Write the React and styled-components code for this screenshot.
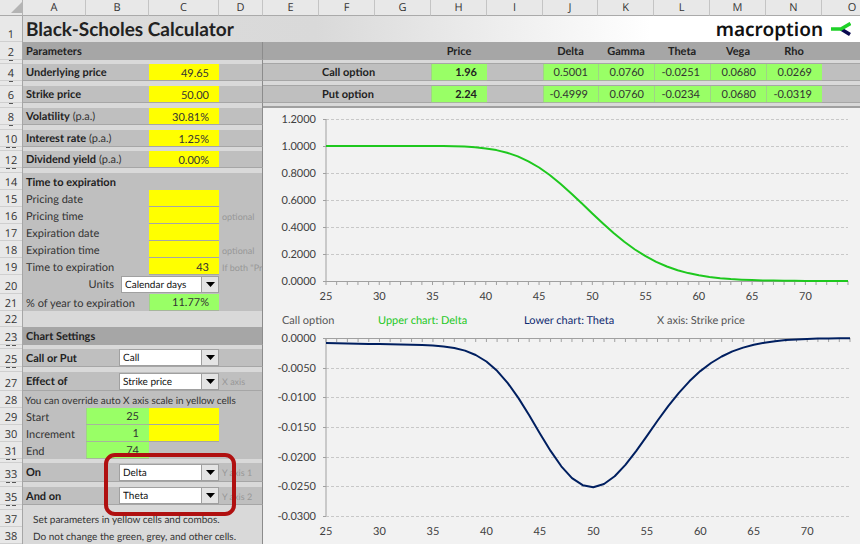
import React, { useState } from "react";
import styled, { createGlobalStyle, css } from "styled-components";

const COLUMNS = [
  ["A", 63],
  ["B", 63],
  ["C", 70],
  ["D", 44],
  ["E", 56],
  ["F", 56],
  ["G", 56],
  ["H", 56],
  ["I", 56],
  ["J", 55],
  ["K", 56],
  ["L", 56],
  ["M", 56],
  ["N", 56],
  ["O", null],
];

const STRIKES = Array.from({ length: 50 }, (_, i) => 25 + i);
const OPTION = { spot: 49.65, vol: 0.3081, rate: 0.0125, years: 43 / 365 };

const pdf = (x) => Math.exp((-x * x) / 2) / Math.sqrt(2 * Math.PI);

const cdf = (x) => {
  const k = 1 / (1 + 0.2316419 * Math.abs(x));
  const poly =
    k *
    (0.31938153 +
      k * (-0.356563782 + k * (1.781477937 + k * (-1.821255978 + k * 1.330274429))));
  const tail = pdf(x) * poly;
  return x > 0 ? 1 - tail : tail;
};

const greeks = (strike) => {
  const { spot, vol, rate, years } = OPTION;
  const dev = vol * Math.sqrt(years);
  const d1 = (Math.log(spot / strike) + (rate + (vol * vol) / 2) * years) / dev;
  const d2 = d1 - dev;
  const decay = (-spot * pdf(d1) * vol) / (2 * Math.sqrt(years));
  const carry = -rate * strike * Math.exp(-rate * years) * cdf(d2);
  return { delta: cdf(d1), theta: (decay + carry) / 365 };
};

const LineChart = ({ title, height, top, bottom, right, max, min, step, axisY, value, color }) => {
  const left = 63;
  const x = (s) => left + ((s - 25) / 49) * (right - left);
  const y = (v) => top + ((max - v) / (max - min)) * (bottom - top);
  const count = Math.round((max - min) / step);
  const levels = Array.from({ length: count + 1 }, (_, i) => max - i * step);
  const points = STRIKES.map((s) => `${x(s).toFixed(1)},${y(value(s)).toFixed(1)}`);

  return (
    <Chart viewBox={`0 0 597 ${height}`} role="img" aria-label={title}>
      {levels.map((v) => (
        <g key={v}>
          <GridLine x1={left} x2={right} y1={Math.round(y(v)) + 0.5} y2={Math.round(y(v)) + 0.5} />
          <AxisLine x1={left - 3} x2={left} y1={Math.round(y(v)) + 0.5} y2={Math.round(y(v)) + 0.5} />
          <AxisText x={53} y={Math.round(y(v)) + 4} textAnchor="end">
            {(Math.abs(v) < 1e-9 ? 0 : v).toFixed(4)}
          </AxisText>
        </g>
      ))}
      <AxisLine x1={left} x2={left} y1={top} y2={bottom} />
      <AxisLine x1={left} x2={right} y1={axisY + 0.5} y2={axisY + 0.5} />
      {STRIKES.map((s) => (
        <AxisLine key={s} x1={x(s)} x2={x(s)} y1={axisY} y2={axisY + 4} />
      ))}
      {STRIKES.filter((s) => s % 5 === 0).map((s) => (
        <AxisText key={s} x={x(s)} y={bottom + 19} textAnchor="middle">
          {s}
        </AxisText>
      ))}
      <polyline points={points.join(" ")} fill="none" stroke={color} strokeWidth="2" strokeLinejoin="round" />
    </Chart>
  );
};

const Row = ({ n, h, tone, children }) => (
  <SheetRow $h={h} $tone={tone}>
    <RowHead scope="row">
      <RowNumber $h={h}>{n}</RowNumber>
    </RowHead>
    {children}
  </SheetRow>
);

// rows squeezed to a few pixels, too low for their number
const Gap = ({ digits = 2, h, children }) => (
  <SheetRow $h={h} $tone="light">
    <RowHead>
      <Sliver $h={h} $digits={digits} />
    </RowHead>
    <Cell colSpan={4} $edge />
    {children}
  </SheetRow>
);

const YellowCell = ({ id, label, value = "" }) => {
  const [text, setText] = useState(value);
  return (
    <Cell $line>
      <YellowInput id={id} aria-label={label} value={text} onChange={(e) => setText(e.target.value)} />
    </Cell>
  );
};

const Combo = ({ id, options, width }) => (
  <ComboBox $width={width}>
    <ComboSelect id={id}>
      {options.map((o) => (
        <option key={o}>{o}</option>
      ))}
    </ComboSelect>
    <ComboArrow>
      <svg width="9" height="5" viewBox="0 0 9 5" aria-hidden="true">
        <path d="M0 0h9L4.5 5z" fill="#000" />
      </svg>
    </ComboArrow>
  </ComboBox>
);

const ParameterCells = ({ id, label, unit, value }) => (
  <>
    <Cell colSpan={2} $line>
      <Label htmlFor={id}>
        <b>{label}</b> {unit}
      </Label>
    </Cell>
    <YellowCell id={id} value={value} />
    <Cell $edge $line />
  </>
);

const OptionCells = ({ name, price, values }) => (
  <>
    <Cell $line />
    <Cell colSpan={2} $line>
      <Label as="b">{name}</Label>
    </Cell>
    <GreenCell>
      <b>{price}</b>
    </GreenCell>
    <Cell $line />
    {values.map((v, i) => (
      <GreenCell key={i}>{v}</GreenCell>
    ))}
    <Cell $line />
  </>
);

const DateCells = ({ id, label, hint, value }) => (
  <>
    <Cell colSpan={2}>
      <Label htmlFor={id}>{label}</Label>
    </Cell>
    <YellowCell id={id} value={value} />
    <Cell $edge>
      <Hint>{hint}</Hint>
    </Cell>
  </>
);

const ComboCells = ({ id, label, hint, options, marked }) => (
  <>
    <Cell $line>
      <Label htmlFor={id}>
        <b>{label}</b>
      </Label>
    </Cell>
    <ComboCell colSpan={2} $line>
      <Combo id={id} options={options} width={100} />
      {marked && <Marker />}
    </ComboCell>
    <Cell $edge $line>
      <Hint>{hint}</Hint>
    </Cell>
  </>
);

const GREEKS = ["Delta", "Gamma", "Theta", "Vega", "Rho"];

const App = () => (
  <>
    <GlobalStyle />
    <Sheet>
      <colgroup>
        <Col $w={23} />
        {COLUMNS.map(([name, w]) => (
          <Col key={name} $w={w} />
        ))}
      </colgroup>
      <thead>
        <tr>
          <Corner>
            <svg width="11" height="11" viewBox="0 0 11 11" aria-hidden="true">
              <path d="M11 0v11H0z" fill="#b4b4b4" />
            </svg>
          </Corner>
          {COLUMNS.map(([name]) => (
            <ColumnHead key={name} scope="col">
              {name}
            </ColumnHead>
          ))}
        </tr>
      </thead>
      <tbody>
        <Row n={1} h={26} tone="light">
          <TitleCell colSpan={15}>
            <TitleBar>
              <Title>Black-Scholes Calculator</Title>
              <Brand>
                macroption
                <svg width="20" height="14" viewBox="0 0 20 14" aria-hidden="true">
                  <path d="M10 7L19 12.500" stroke="#0a0a50" strokeWidth="3.600" />
                  <path d="M0 7H10L19.500 1.500" stroke="#1fd128" strokeWidth="3.600" fill="none" />
                </svg>
              </Brand>
            </TitleBar>
          </TitleCell>
        </Row>
        <Row n={2} h={18} tone="dark">
          <Cell colSpan={4} $edge $line>
            <Label as="b">Parameters</Label>
          </Cell>
          <Cell colSpan={3} $line />
          <HeadCell scope="col">Price</HeadCell>
          <Cell $line />
          {GREEKS.map((g) => (
            <HeadCell key={g} scope="col">
              {g}
            </HeadCell>
          ))}
          <Cell $line />
        </Row>
        <Gap digits={1} h={4}>
          <Cell colSpan={11} $line />
        </Gap>
        <Row n={4} h={17}>
          <ParameterCells id="spot" label="Underlying price" value="49.65" />
          <OptionCells name="Call option" price="1.96" values={["0.5001", "0.0760", "-0.0251", "0.0680", "0.0269"]} />
        </Row>
        <Gap digits={1} h={5}>
          <Cell colSpan={11} $line />
        </Gap>
        <Row n={6} h={17}>
          <ParameterCells id="strike" label="Strike price" value="50.00" />
          <OptionCells name="Put option" price="2.24" values={["-0.4999", "0.0760", "-0.0234", "0.0680", "-0.0319"]} />
        </Row>
        <Gap digits={1} h={5}>
          <ChartTop colSpan={11} />
        </Gap>
        <Row n={8} h={17}>
          <ParameterCells id="vol" label="Volatility" unit="(p.a.)" value="30.81%" />
          <ChartCell colSpan={11} rowSpan={31}>
            <LineChart
              title="Delta by strike price"
              height={203}
              top={11}
              bottom={173}
              right={585}
              max={1.2}
              min={0}
              step={0.2}
              axisY={173}
              value={(s) => greeks(s).delta}
              color="#1ec81e"
            />
            <Legend>
              <span>Call option</span>
              <LegendItem $color="#1ec81e">Upper chart: Delta</LegendItem>
              <LegendItem $color="#0f2a70">Lower chart: Theta</LegendItem>
              <span>X axis: Strike price</span>
            </Legend>
            <LineChart
              title="Theta by strike price"
              height={215}
              top={9}
              bottom={187}
              right={587}
              max={0}
              min={-0.03}
              step={0.005}
              axisY={9}
              value={(s) => greeks(s).theta}
              color="#001f60"
            />
          </ChartCell>
        </Row>
        <Gap h={5} digits={1} />
        <Row n={10} h={17}>
          <ParameterCells id="rate" label="Interest rate" unit="(p.a.)" value="1.25%" />
        </Row>
        <Gap h={4} />
        <Row n={12} h={17}>
          <ParameterCells id="yield" label="Dividend yield" unit="(p.a.)" value="0.00%" />
        </Row>
        <Gap h={5} />
        <Row n={14} h={17}>
          <Cell colSpan={4} $edge>
            <Label as="b">Time to expiration</Label>
          </Cell>
        </Row>
        <Row n={15} h={17}>
          <DateCells id="pricing-date" label="Pricing date" />
        </Row>
        <Row n={16} h={17}>
          <DateCells id="pricing-time" label="Pricing time" hint="optional" />
        </Row>
        <Row n={17} h={17}>
          <DateCells id="expiration-date" label="Expiration date" />
        </Row>
        <Row n={18} h={17}>
          <DateCells id="expiration-time" label="Expiration time" hint="optional" />
        </Row>
        <Row n={19} h={17}>
          <DateCells id="time" label="Time to expiration" value="43" hint={'If both "Pri'} />
        </Row>
        <Row n={20} h={19}>
          <Cell colSpan={3}>
            <UnitsLine>
              <label htmlFor="units">Units</label>
              <Combo id="units" options={["Calendar days", "Trading days"]} width={98} />
            </UnitsLine>
          </Cell>
          <Cell $edge />
        </Row>
        <Row n={21} h={17}>
          <Cell colSpan={2}>
            <Label as="span">% of year to expiration</Label>
          </Cell>
          <GreenCell>11.77%</GreenCell>
          <Cell $edge />
        </Row>
        <Row n={22} h={16} tone="light">
          <Cell colSpan={4} $edge />
        </Row>
        <Row n={23} h={18} tone="dark">
          <Cell colSpan={4} $edge $line>
            <Label as="b">Chart Settings</Label>
          </Cell>
        </Row>
        <Gap h={4} />
        <Row n={25} h={18}>
          <ComboCells id="type" label="Call or Put" options={["Call", "Put"]} />
        </Row>
        <Gap h={5} />
        <Row n={27} h={19}>
          <ComboCells id="effect" label="Effect of" hint="X axis" options={["Strike price", "Volatility"]} />
        </Row>
        <Row n={28} h={17}>
          <Cell colSpan={4} $edge>
            <Note>You can override auto X axis scale in yellow cells</Note>
          </Cell>
        </Row>
        <Row n={29} h={17}>
          <Cell>
            <Label htmlFor="start">Start</Label>
          </Cell>
          <GreenCell>25</GreenCell>
          <YellowCell id="start" />
          <Cell $edge />
        </Row>
        <Row n={30} h={17}>
          <Cell>
            <Label htmlFor="increment">Increment</Label>
          </Cell>
          <GreenCell>1</GreenCell>
          <YellowCell id="increment" />
          <Cell $edge />
        </Row>
        <Row n={31} h={17}>
          <Cell>
            <Label as="span">End</Label>
          </Cell>
          <GreenCell>74</GreenCell>
          <Cell colSpan={2} $edge />
        </Row>
        <Gap h={4} />
        <Row n={33} h={19}>
          <ComboCells id="on" label="On" hint="Y axis 1" options={GREEKS} marked />
        </Row>
        <Gap h={5} />
        <Row n={35} h={18}>
          <ComboCells id="and-on" label="And on" hint="Y axis 2" options={["Theta", "Delta", "Gamma", "Vega", "Rho"]} />
        </Row>
        <Gap h={5} />
        <Row n={37} h={17} tone="light">
          <Cell colSpan={4} $edge>
            <Note $indent>Set parameters in yellow cells and combos.</Note>
          </Cell>
        </Row>
        <Row n={38} h={17} tone="light">
          <Cell colSpan={4} $edge>
            <Note $indent>Do not change the green, grey, and other cells.</Note>
          </Cell>
        </Row>
      </tbody>
    </Sheet>
  </>
);

export default App;

const GlobalStyle = createGlobalStyle`
  * {
    box-sizing: border-box;
  }
  body {
    margin: 0;
    background: #f2f2f2;
    color: #333;
    font: 11px/14px Lato, "Open Sans", sans-serif;
    text-rendering: geometricPrecision;
    overflow-x: hidden;
  }
  b {
    color: #222;
  }
`;

const tones = { light: "#d9d9d9", mid: "#bfbfbf", dark: "#a6a6a6" };

const Sheet = styled.table`
  width: 100%;
  table-layout: fixed;
  border-collapse: separate;
  border-spacing: 0;
  th,
  td {
    padding: 0;
  }
`;
const Col = styled.col`
  width: ${({ $w }) => ($w ? `${$w}px` : "auto")};
`;
const SheetRow = styled.tr`
  height: ${({ $h }) => $h}px;
  background: ${({ $tone }) => tones[$tone || "mid"]};
`;
const headCell = css`
  background: #e8e8e8;
  color: #333;
  font: 11px/14px "Open Sans", "Noto Sans", sans-serif;
  text-align: center;
`;
const Corner = styled.td`
  background: #e8e8e8;
  border-right: 1px solid #b4b4b4;
  border-bottom: 1px solid #aaa;
  text-align: right;
  line-height: 0;
`;
const ColumnHead = styled.th`
  ${headCell}
  height: 16px;
  border-right: 1px solid #c4c4c4;
  border-bottom: 1px solid #aaa;
  &:last-child {
    border-right: 0;
    && {
      padding-left: 22px;
    }
  }
`;
const RowHead = styled.th`
  ${headCell}
  border-right: 1px solid #a6a6a6;
`;
const RowNumber = styled.div`
  height: ${({ $h }) => $h}px;
  display: flex;
  align-items: flex-end;
  justify-content: center;
  border-bottom: 1px solid #cfcfcf;
  line-height: 13px;
`;
const Sliver = styled.div`
  height: ${({ $h }) => $h}px;
  border-bottom: 1px solid #cfcfcf;
  &::before {
    content: "";
    display: block;
    width: ${({ $digits }) => ($digits === 1 ? 4 : 10)}px;
    height: 1px;
    margin: 0 auto;
    background: repeating-linear-gradient(90deg, #555 0 4px, transparent 4px 6px);
  }
`;
const Cell = styled.td`
  white-space: nowrap;
  overflow: hidden;
  border-right: ${({ $edge }) => ($edge ? "1px solid #8c8c8c" : "0")};
  border-bottom: ${({ $line }) => ($line ? "1px solid #a6a6a6" : "0")};
`;
const ComboCell = styled(Cell)`
  position: relative;
  overflow: visible;
`;
const TitleCell = styled.td`
  background: linear-gradient(90deg, #dcdcdc 0, #d9d9d9 35%, #fff 75%);
`;
const TitleBar = styled.div`
  display: flex;
  align-items: center;
  justify-content: space-between;
  height: 26px;
  padding: 2px 9px 0 3px;
`;
const Title = styled.h1`
  margin: 0;
  color: #222;
  font-size: 19px;
  line-height: 24px;
`;
const Brand = styled.div`
  display: flex;
  align-items: center;
  gap: 8px;
  padding-bottom: 2px;
  color: #111;
  font: 600 19px/22px "Noto Sans", "Open Sans", sans-serif;
`;
const Label = styled.label`
  display: block;
  padding: 2px 0 0 3px;
`;
const Hint = styled.div`
  padding: 2px 0 0 3px;
  color: #979797;
  font-size: 9px;
`;
const Note = styled.div`
  padding: 2px 0 0 ${({ $indent }) => ($indent ? 10 : 2)}px;
  font-size: 10px;
`;
const HeadCell = styled.th`
  && {
    padding-top: 2px;
  }
  border-bottom: 1px solid #a6a6a6;
  color: #222;
  text-align: center;
`;
const GreenCell = styled.td`
  && {
    padding: 2px 10px 0 0;
  }
  background: #99ff66;
  border-bottom: 1px solid #a6b69c;
  box-shadow: inset 1px 0 #a0d486;
  text-align: right;
`;
const YellowInput = styled.input`
  display: block;
  width: 100%;
  height: 16px;
  padding: 2px 10px 0 0;
  border: 0;
  border-radius: 0;
  background: #ffff00;
  color: #333;
  font: inherit;
  text-align: right;
  text-rendering: inherit;
`;
const ComboBox = styled.div`
  position: relative;
  width: ${({ $width }) => $width}px;
  height: 17px;
  margin-left: auto;
`;
const ComboSelect = styled.select`
  appearance: none;
  display: block;
  width: 100%;
  height: 100%;
  padding: 2px 18px 0 3px;
  border: 1px solid #a0a0a0;
  border-radius: 0;
  background: #fff;
  color: #111;
  font: 10px/13px Lato, sans-serif;
  text-rendering: inherit;
`;
const ComboArrow = styled.span`
  position: absolute;
  top: 0;
  right: 0;
  display: flex;
  align-items: center;
  justify-content: center;
  width: 18px;
  height: 100%;
  border: 1px solid #a0a0a0;
  background: #e4e4e4;
  pointer-events: none;
`;
const UnitsLine = styled.div`
  display: flex;
  align-items: center;
  justify-content: flex-end;
  gap: 7px;
  ${ComboBox} {
    margin-left: 0;
  }
`;
const Marker = styled.div`
  position: absolute;
  z-index: 1;
  top: -10px;
  left: 18px;
  right: -17px;
  height: 63px;
  border: 4px solid #b01010;
  border-radius: 11px;
  pointer-events: none;
`;
const ChartTop = styled.td`
  border-bottom: 2px solid #a0a0a0;
`;
const ChartCell = styled.td`
  background: #f2f2f2;
  vertical-align: top;
`;
const Chart = styled.svg`
  display: block;
  width: 100%;
`;
const GridLine = styled.line`
  stroke: #c8c8c8;
  stroke-dasharray: 3 2;
`;
const AxisLine = styled.line`
  stroke: #a0a0a0;
`;
const AxisText = styled.text`
  fill: #404040;
  font-size: 11px;
`;
const Legend = styled.div`
  display: grid;
  grid-template-columns: 96px 146px 133px auto;
  height: 18px;
  padding: 2px 0 0 19px;
  align-items: center;
  color: #555;
`;
const LegendItem = styled.span`
  color: ${({ $color }) => $color};
`;
